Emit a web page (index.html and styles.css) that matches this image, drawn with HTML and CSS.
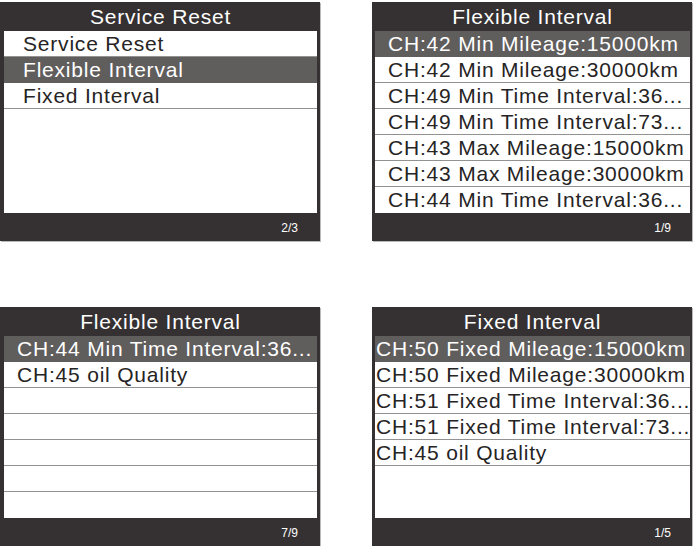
FILE: index.html
```html
<!DOCTYPE html>
<html lang="en">
<head>
<meta charset="utf-8">
<title>Service Reset</title>
<link rel="stylesheet" href="styles.css">
</head>
<body>
<main class="sheet">

  <section class="screen screen--wide-left">
    <header class="screen__title">Service Reset</header>
    <ul class="menu menu--indent">
      <li class="menu__item">Service Reset</li>
      <li class="menu__item is-selected">Flexible Interval</li>
      <li class="menu__item">Fixed Interval</li>
    </ul>
    <footer class="screen__footer"><span class="pager">2/3</span></footer>
  </section>

  <section class="screen">
    <header class="screen__title">Flexible Interval</header>
    <ul class="menu menu--pad">
      <li class="menu__item is-selected">CH:42 Min Mileage:15000km</li>
      <li class="menu__item">CH:42 Min Mileage:30000km</li>
      <li class="menu__item">CH:49 Min Time Interval:36...</li>
      <li class="menu__item">CH:49 Min Time Interval:73...</li>
      <li class="menu__item">CH:43 Max Mileage:15000km</li>
      <li class="menu__item">CH:43 Max Mileage:30000km</li>
      <li class="menu__item menu__item--last">CH:44 Min Time Interval:36...</li>
    </ul>
    <footer class="screen__footer"><span class="pager">1/9</span></footer>
  </section>

  <section class="screen screen--wide-left">
    <header class="screen__title">Flexible Interval</header>
    <ul class="menu menu--pad">
      <li class="menu__item is-selected">CH:44 Min Time Interval:36...</li>
      <li class="menu__item">CH:45 oil Quality</li>
      <li class="menu__item"></li>
      <li class="menu__item"></li>
      <li class="menu__item"></li>
      <li class="menu__item"></li>
      <li class="menu__item menu__item--last"></li>
    </ul>
    <footer class="screen__footer"><span class="pager">7/9</span></footer>
  </section>

  <section class="screen">
    <header class="screen__title">Fixed Interval</header>
    <ul class="menu menu--flush">
      <li class="menu__item is-selected">CH:50 Fixed Mileage:15000km</li>
      <li class="menu__item">CH:50 Fixed Mileage:30000km</li>
      <li class="menu__item">CH:51 Fixed Time Interval:36...</li>
      <li class="menu__item">CH:51 Fixed Time Interval:73...</li>
      <li class="menu__item">CH:45 oil Quality</li>
    </ul>
    <footer class="screen__footer"><span class="pager">1/5</span></footer>
  </section>

</main>
</body>
</html>
```

FILE: styles.css
```css
* {
  box-sizing: border-box;
}

html,
body {
  margin: 0;
  padding: 0;
  background: #ffffff;
}

body {
  font-family: "Liberation Sans", Arial, sans-serif;
}

/* two by two arrangement of device screens */
.sheet {
  display: grid;
  grid-template-columns: 320px 320px;
  grid-template-rows: 239px 239px;
  column-gap: 52px;
  row-gap: 66px;
  padding-top: 2px;
}

.screen {
  display: flex;
  flex-direction: column;
  width: 320px;
  height: 239px;
  background: #353132;
  padding: 0 2px 0 3px;
  box-shadow: 1px 1px 0 #b9b9b9;
}

.screen--wide-left {
  padding: 0 3px 0 4px;
}

.screen__title {
  height: 29px;
  line-height: 29px;
  text-align: center;
  color: #ffffff;
  font-size: 21px;
  letter-spacing: 0.8px;
}

/* list area: seven rows of 26px */
.menu {
  list-style: none;
  margin: 0;
  padding: 0;
  height: 182px;
  background: #ffffff;
  overflow: hidden;
}

.menu__item {
  height: 26px;
  line-height: 26px;
  border-bottom: 1px solid #929292;
  color: #262424;
  font-size: 21px;
  letter-spacing: 0.8px;
  white-space: nowrap;
  overflow: hidden;
}

.menu__item--last {
  border-bottom: none;
}

.menu__item.is-selected {
  background: #605d5d;
  color: #ffffff;
  border-bottom-color: #605d5d;
}

.menu--indent .menu__item {
  padding-left: 19px;
}

.menu--pad .menu__item {
  padding-left: 13px;
}

.menu--flush .menu__item {
  padding-left: 1px;
}

.screen__footer {
  flex: 1;
  display: flex;
  align-items: center;
  justify-content: flex-end;
  padding-right: 19px;
}

.pager {
  color: #ffffff;
  font-size: 12px;
  padding-top: 2px;
}
```
